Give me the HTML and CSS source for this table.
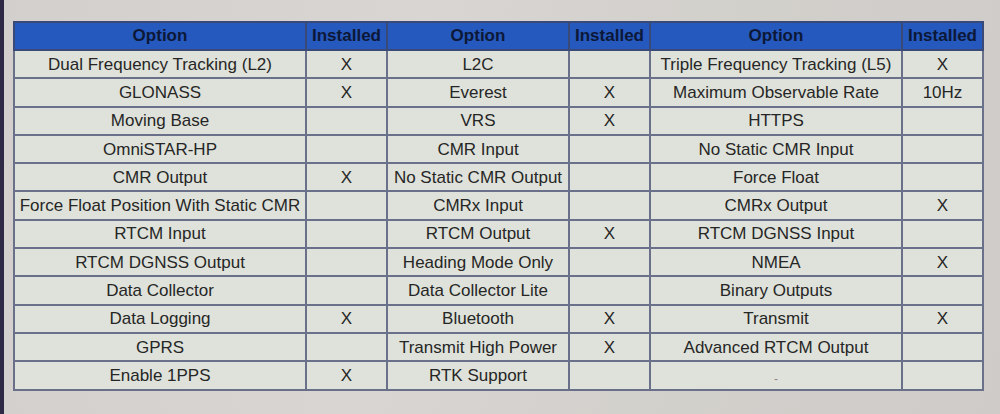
FILE: index.html
```html
<!DOCTYPE html>
<html>
<head>
<meta charset="utf-8">
<link rel="stylesheet" href="styles.css">
</head>
<body>
<div class="screen">
<table class="opts">
<colgroup>
<col class="c-opt1"><col class="c-ins"><col class="c-opt2"><col class="c-ins"><col class="c-opt3"><col class="c-ins">
</colgroup>
<thead>
<tr><th>Option</th><th>Installed</th><th>Option</th><th>Installed</th><th>Option</th><th>Installed</th></tr>
</thead>
<tbody>
<tr><td>Dual Frequency Tracking (L2)</td><td>X</td><td>L2C</td><td></td><td>Triple Frequency Tracking (L5)</td><td>X</td></tr>
<tr><td>GLONASS</td><td>X</td><td>Everest</td><td>X</td><td>Maximum Observable Rate</td><td>10Hz</td></tr>
<tr><td>Moving Base</td><td></td><td>VRS</td><td>X</td><td>HTTPS</td><td></td></tr>
<tr><td>OmniSTAR-HP</td><td></td><td>CMR Input</td><td></td><td>No Static CMR Input</td><td></td></tr>
<tr><td>CMR Output</td><td>X</td><td>No Static CMR Output</td><td></td><td>Force Float</td><td></td></tr>
<tr><td>Force Float Position With Static CMR</td><td></td><td>CMRx Input</td><td></td><td>CMRx Output</td><td>X</td></tr>
<tr><td>RTCM Input</td><td></td><td>RTCM Output</td><td>X</td><td>RTCM DGNSS Input</td><td></td></tr>
<tr><td>RTCM DGNSS Output</td><td></td><td>Heading Mode Only</td><td></td><td>NMEA</td><td>X</td></tr>
<tr><td>Data Collector</td><td></td><td>Data Collector Lite</td><td></td><td>Binary Outputs</td><td></td></tr>
<tr><td>Data Logging</td><td>X</td><td>Bluetooth</td><td>X</td><td>Transmit</td><td>X</td></tr>
<tr><td>GPRS</td><td></td><td>Transmit High Power</td><td>X</td><td>Advanced RTCM Output</td><td></td></tr>
<tr><td>Enable 1PPS</td><td>X</td><td>RTK Support</td><td></td><td class="dash">-</td><td></td></tr>
</tbody>
</table>
</div>
</body>
</html>
```
FILE: styles.css
```css
html, body {
  margin: 0;
  padding: 0;
}
body {
  width: 1000px;
  height: 414px;
  overflow: hidden;
  background: linear-gradient(100deg, #d3cfcc 0%, #d8d5d2 40%, #d2d0cb 70%, #cfcbc9 100%);
  border-left: 4px solid #2e2a45;
  box-sizing: border-box;
  font-family: "Liberation Sans", Arial, sans-serif;
}
.screen {
  padding: 21px 0 0 9px;
}
.opts {
  border-collapse: collapse;
  table-layout: fixed;
  width: 971px;
  background: #dfe2da;
  color: #262626;
  font-size: 17px;
  line-height: 20px;
}
.c-opt1 { width: 292px; }
.c-ins { width: 81px; }
.c-opt2 { width: 182px; }
.c-opt3 { width: 252px; }
.opts th, .opts td {
  border: 2px solid #6a7089;
  text-align: center;
  padding: 0;
  white-space: nowrap;
  overflow: hidden;
}
.opts th {
  background: #2659bd;
  color: #0c1838;
  font-weight: bold;
  height: 26px;
  border-color: #3a4a78;
}
.opts td {
  height: 25.3px;
  padding-top: 1px;
}
.opts td.dash {
  color: #8a8a8a;
  font-size: 12px;
  vertical-align: bottom;
}
```
